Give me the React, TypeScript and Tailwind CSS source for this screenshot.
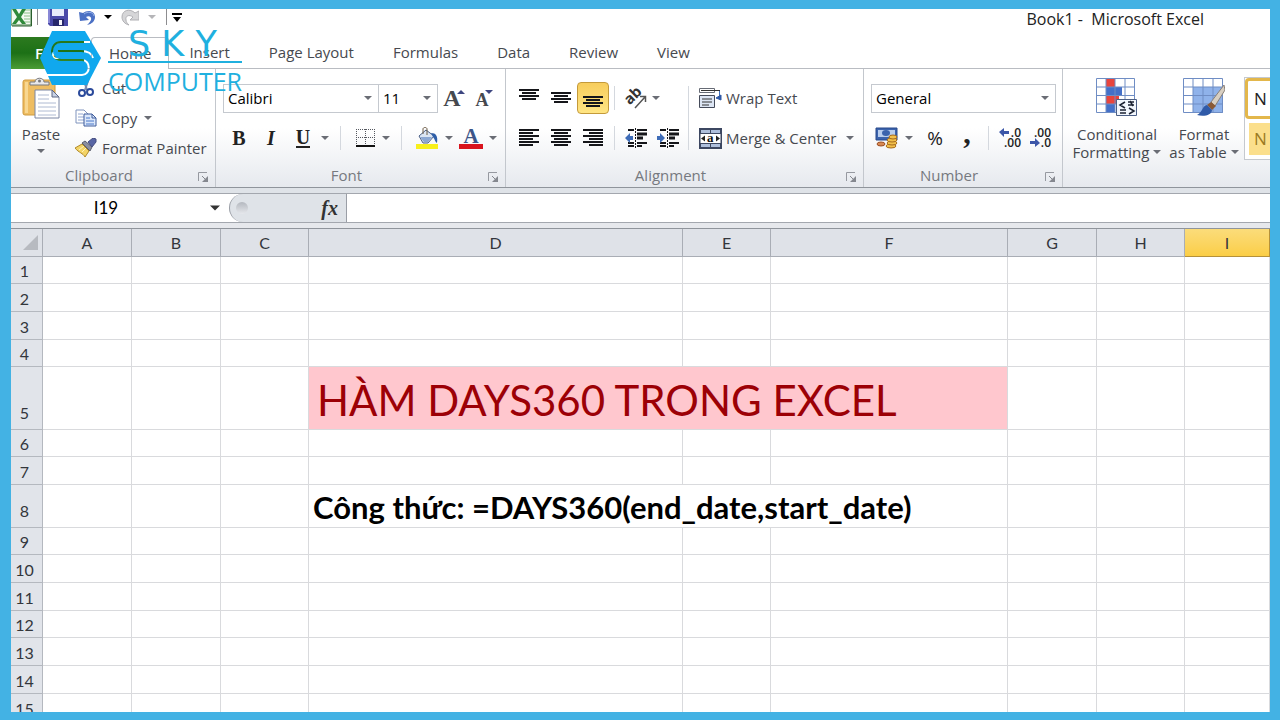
import clsx from "clsx";
import type { FC, ReactNode } from "react";

interface ChildrenProps {
  children: ReactNode;
}

interface IconButtonProps extends ChildrenProps {
  label: string;
  className?: string;
}

const Caret: FC<{ className?: string }> = ({ className }) => (
  <svg
    viewBox="0 0 8 4"
    className={clsx("h-1 w-2 shrink-0 fill-current", className)}
    aria-hidden="true"
  >
    <path d="M0 0h8L4 4z" />
  </svg>
);

const IconButton: FC<IconButtonProps> = ({ label, className, children }) => (
  <button
    type="button"
    aria-label={label}
    className={clsx("flex h-8 items-center justify-center", className ?? "w-8")}
  >
    {children}
  </button>
);

const DropButton: FC<{ label: string }> = ({ label }) => (
  <button
    type="button"
    aria-label={label}
    className="flex h-8 w-3 items-center justify-center text-[#6a6d75]"
  >
    <Caret />
  </button>
);

const Divider: FC<{ className?: string }> = ({ className }) => (
  <span className={clsx("w-px", className ?? "mx-[9px] h-6 bg-[#d4d8de]")} />
);

/* quick access toolbar */

const ExcelIcon = () => (
  <svg viewBox="0 0 22 19" className="h-[19px] w-[22px]" aria-hidden="true">
    <path d="M0 0h20v17H0z" fill="#f4faf2" stroke="#3c7d3f" />
    <path d="M13 2h6M13 5h6M13 8h6M13 11h6M13 14h6" stroke="#8abf88" />
    <path d="M1 1h4l3 5 3-5h4l-5 8 5 7h-4l-3-4-3 4H1l5-7z" fill="#2f8a3a" />
    <path d="M20.500 1v17H1" fill="none" stroke="#2b5f2e" />
  </svg>
);

const SaveIcon = () => (
  <svg viewBox="0 0 20 18" className="h-[18px] w-5" aria-hidden="true">
    <path d="M0 0h20v18H2l-2-2z" fill="#4a49a8" />
    <path d="M4 0h12v8H4z" fill="#e8ebfa" />
    <path d="M5 11h11v7H5z" fill="#27276b" />
    <path d="M11 12h3v5h-3z" fill="#f4f4fb" />
    <path d="M1 0v15" stroke="#8988d6" strokeWidth="2" />
  </svg>
);

const UndoIcon = () => (
  <svg viewBox="0 0 18 17" className="h-[17px] w-[18px]" aria-hidden="true">
    <path d="M0 3l1 9 9-1-3-3c3-2 6 0 5 3-1 2-2 3-4 5 5-1 8-4 8-8 0-6-7-8-12-4z" fill="#4b70c4" />
    <path d="M5 5c4-3 9-2 10 2" fill="none" stroke="#9db6ea" />
  </svg>
);

const RedoIcon = () => (
  <svg viewBox="0 0 18 17" className="h-[17px] w-[18px]" aria-hidden="true">
    <path
      d="M18 2v9H9l3-3C8 5 4 7 5 11c0 2 1 3 3 5-4-1-7-4-7-8 0-7 8-9 13-4z"
      fill="#d6d6d8"
      stroke="#b0b0b4"
    />
  </svg>
);

const QuickAccess = () => (
  <div className="flex items-center">
    <ExcelIcon />
    <Divider className="mx-1 h-4 bg-[#8d8d90]" />
    <IconButton label="Save">
      <SaveIcon />
    </IconButton>
    <IconButton label="Undo" className="w-7">
      <UndoIcon />
    </IconButton>
    <Caret className="mx-0.5 text-black" />
    <IconButton label="Redo">
      <RedoIcon />
    </IconButton>
    <Caret className="mx-0.5 text-[#b5b5b8]" />
    <Divider className="ml-2 h-4 bg-[#8d8d90]" />
    <IconButton label="Customize Quick Access Toolbar" className="w-5">
      <svg viewBox="0 0 10 9" className="h-[9px] w-2.5" aria-hidden="true">
        <path d="M0 0h10v2H0zM1 4h8L5 9z" />
      </svg>
    </IconButton>
  </div>
);

const tabs = ["Insert", "Page Layout", "Formulas", "Data", "Review", "View"];

const TabStrip = () => (
  <nav className="flex h-8 gap-px border-b border-[#b9bcc2]" aria-label="Ribbon tabs">
    <button
      type="button"
      className="-mb-px w-[73px] bg-linear-to-b from-[#2c7a1f] via-[#1c7016] to-[#4b9d35] text-[15px] font-semibold text-white"
    >
      File
    </button>
    <button
      type="button"
      className="-mb-px ml-1.5 rounded-t border border-b-0 border-[#b9bcc2] bg-white px-[17px]"
    >
      Home
    </button>
    {tabs.map((tab) => (
      <button key={tab} type="button" className="px-[19px]">
        {tab}
      </button>
    ))}
  </nav>
);

/* ribbon groups */

interface GroupProps extends ChildrenProps {
  title: string;
  className: string;
}

const Group: FC<GroupProps> = ({ title, className, children }) => (
  <section
    aria-label={title}
    className={clsx("flex shrink-0 flex-col border-r border-[#c3c7cd]", className)}
  >
    <div className="h-[95px]">{children}</div>
    <div className="flex h-[22px] items-center">
      <h2 className="flex-1 text-center text-[#76797f]">{title}</h2>
      <button
        type="button"
        aria-label={`${title} settings`}
        className="flex w-7 justify-end pr-1.5"
      >
        <svg viewBox="0 0 11 11" className="mt-1 h-[11px] w-[11px]" aria-hidden="true">
          <path d="M.5 9V.5H9" fill="none" stroke="#9699a0" />
          <path d="M4 4l4 4" stroke="#85888f" />
          <path d="M10 4v6H4z" fill="#85888f" />
        </svg>
      </button>
    </div>
  </section>
);

const PasteIcon = () => (
  <svg viewBox="0 0 38 42" className="h-[42px] w-[38px]" aria-hidden="true">
    <rect x="1" y="3" width="32" height="35" rx="2" fill="#eebd62" stroke="#cf9a3e" />
    <path d="M3 5h3v31H3z" fill="#f8d791" />
    <path d="M8 8V5h5c0-5 9-5 9 0h5v3z" fill="#e8e8ea" stroke="#77787c" />
    <circle cx="17.500" cy="4" r="1.500" fill="#77787c" />
    <path d="M13 13h17l7 7v21H13z" fill="#fff" stroke="#7b86a4" />
    <path d="M30 13v7h7z" fill="#c9d3e6" stroke="#5c6683" />
    <path
      d="M16 18h11M16 22h11M16 26h18M16 30h18M16 34h18M16 38h18"
      stroke="#aebad2"
    />
  </svg>
);

const CutIcon = () => (
  <svg viewBox="0 0 16 20" className="h-5 w-[22px]" aria-hidden="true">
    <path d="M5 0l4 12M11 0L7 12" stroke="#7c8bb0" strokeWidth="2" />
    <circle cx="4" cy="15" r="3" fill="none" stroke="#2b4a9b" strokeWidth="2" />
    <circle cx="12" cy="14" r="3" fill="none" stroke="#2b4a9b" strokeWidth="2" />
  </svg>
);

const CopyIcon = () => (
  <svg viewBox="0 0 22 18" className="h-[18px] w-[22px]" aria-hidden="true">
    <path d="M1 1h8l4 4v9H1z" fill="#fff" stroke="#7f93bd" />
    <path d="M3 5h5M3 8h7M3 11h7" stroke="#90a5d0" />
    <path d="M9 5h8l4 4v8H9z" fill="#dbe7fa" stroke="#3f5c9c" />
    <path d="M17 5v4h4" fill="none" stroke="#3f5c9c" />
    <path d="M11 9h4M11 12h8M11 15h8" stroke="#4b79c9" />
  </svg>
);

const PainterIcon = () => (
  <svg viewBox="0 0 22 20" className="h-5 w-[22px]" aria-hidden="true">
    <path d="M0 10l7-4 7 7-4 6C8 15 4 15 0 10z" fill="#f3d467" stroke="#b08a2a" />
    <path d="M4 12l5-4M7 14l4-4" stroke="#fff3bd" />
    <path d="M7 5l3-2 7 6-2 4z" fill="#8b8fa0" stroke="#5a5d6c" />
    <path d="M13 4l5-4 3 1 0 3-4 5z" fill="#5865a4" stroke="#454d80" />
  </svg>
);

const ClipboardGroup = () => (
  <Group title="Clipboard" className="w-[205px]">
    <div className="flex">
      <button
        type="button"
        className="ml-2 flex w-11 flex-col items-center pt-2 leading-[18px]"
      >
        <PasteIcon />
        <span className="mt-1.5">Paste</span>
        <Caret className="mt-1.5 text-[#6a6d75]" />
      </button>
      <div className="ml-3 flex flex-col pt-1">
        <button type="button" className="flex h-[30px] items-center gap-[5px]">
          <CutIcon />
          Cut
        </button>
        <button type="button" className="flex h-[30px] items-center gap-[5px]">
          <CopyIcon />
          Copy
          <Caret className="ml-0.5 text-[#6a6d75]" />
        </button>
        <button
          type="button"
          className="flex h-[30px] items-center gap-[5px] whitespace-nowrap"
        >
          <PainterIcon />
          Format Painter
        </button>
      </div>
    </div>
  </Group>
);

interface ComboProps {
  label: string;
  value: string;
  className: string;
}

const Combo: FC<ComboProps> = ({ label, value, className }) => (
  <div
    className={clsx(
      "grid h-[29px] items-center border border-[#c5c9cf] bg-white text-black",
      className,
    )}
  >
    <select
      aria-label={label}
      className="col-start-1 row-start-1 w-full appearance-none bg-transparent pl-1 outline-none"
    >
      <option>{value}</option>
    </select>
    <Caret className="pointer-events-none col-start-1 row-start-1 mr-1.5 justify-self-end text-[#6a6d75]" />
  </div>
);

const BordersIcon = () => (
  <svg viewBox="0 0 19 20" className="h-5 w-[19px]" aria-hidden="true">
    <path
      d="M.5 1v16M9.500 1v16M18.500 1v16M0 1.500h19M0 9.500h19"
      fill="none"
      stroke="#55585f"
      strokeDasharray="1 1"
    />
    <path d="M0 18h19" stroke="#111" strokeWidth="2" />
  </svg>
);

const FillIcon = () => (
  <svg viewBox="0 0 23 23" className="h-[23px] w-[23px]" aria-hidden="true">
    <path d="M0 17h22v5H0z" fill="#f8f01c" />
    <path d="M3 9l7-6 8 6-6 7H7z" fill="#dbe5f3" stroke="#4a5f86" />
    <path d="M4 10h12l-4 5H8z" fill="#8ba7d3" />
    <path d="M7 7V2c0-2 4-2 4 0v6" fill="none" stroke="#6b5a45" />
    <path d="M15 6c5 0 7 3 6 10-2-1-2-4-4-6z" fill="#2f5fa8" />
  </svg>
);

const FontGroup = () => (
  <Group title="Font" className="w-[290px]">
    <div className="pt-[9px] pl-[7px]">
      <div className="flex h-10 items-center">
        <Combo label="Font name" value="Calibri" className="w-[156px]" />
        <Combo label="Font size" value="11" className="w-[59px] border-l-0" />
        <IconButton label="Increase font size">
          <span className="font-['Liberation_Serif'] text-[24px] leading-6 font-bold">A</span>
          <Caret className="mt-2 -ml-1 rotate-180 self-start text-[#3d4680]" />
        </IconButton>
        <IconButton label="Decrease font size" className="w-7">
          <span className="pt-1 font-['Liberation_Serif'] text-[18px] leading-6 font-bold">A</span>
          <Caret className="mt-2 -ml-1 self-start text-[#3d4680]" />
        </IconButton>
      </div>
      <div className="flex h-10 items-center font-['Liberation_Serif'] text-[20px] text-[#222]">
        <IconButton label="Bold">
          <strong>B</strong>
        </IconButton>
        <IconButton label="Italic">
          <em className="font-bold">I</em>
        </IconButton>
        <IconButton label="Underline">
          <span className="border-b-2 leading-[18px] font-bold">U</span>
        </IconButton>
        <DropButton label="Underline style" />
        <Divider />
        <IconButton label="Borders" className="w-[30px]">
          <BordersIcon />
        </IconButton>
        <DropButton label="Border style" />
        <Divider />
        <IconButton label="Fill color">
          <FillIcon />
        </IconButton>
        <DropButton label="Fill colors" />
        <IconButton label="Font color">
          <span className="border-b-[5px] border-[#d9141e] px-1 text-[21px] leading-4 font-bold text-[#3c5488]">
            A
          </span>
        </IconButton>
        <DropButton label="Font colors" />
      </div>
    </div>
  </Group>
);

type Align = "start" | "center" | "end";

const lineWidths = [20, 14, 20, 14, 20, 14];

interface LinesProps {
  align: Align;
  count: number;
  className?: string;
}

const Lines: FC<LinesProps> = ({ align, count, className }) => (
  <svg
    viewBox={`0 0 20 ${count * 3}`}
    className={clsx("w-5 fill-[#15161a]", className)}
    aria-hidden="true"
  >
    {lineWidths.slice(0, count).map((width, index) => {
      const slack = 20 - width;
      const x = align === "start" ? 0 : align === "end" ? slack : slack / 2;
      return <rect key={index} x={x} y={index * 3} width={width} height={2} />;
    })}
  </svg>
);

const OrientationIcon = () => (
  <svg viewBox="0 0 24 20" className="h-5 w-6 overflow-visible" aria-hidden="true">
    <text
      x="3"
      y="17"
      transform="rotate(-45 5 14)"
      fontFamily="Open Sans, sans-serif"
      fontSize="15"
      fontWeight="700"
      fill="#333"
    >
      ab
    </text>
    <path d="M11 20L21 9M16 8.500h5.500V14" fill="none" stroke="#555" strokeWidth="1.500" />
  </svg>
);

const IndentIcon: FC<{ increase?: boolean }> = ({ increase }) => (
  <svg viewBox="0 0 22 20" className="h-5 w-[22px]" aria-hidden="true">
    <path d="M3 2h6M12 2h10M3 15h6M12 15h10M3 18h6M12 18h5" stroke="#15161a" strokeWidth="2" />
    <path d="M12 6h10M12 10h6" stroke="#15161a" strokeWidth="3" />
    <path d="M10.500 0v20" stroke="#15161a" strokeDasharray="2 1" />
    <path
      d={increase ? "M0 8h3V5l5 5-5 5v-3H0z" : "M8 8H5V5l-5 5 5 5v-3h3z"}
      fill="#3e6cb8"
    />
  </svg>
);

const WrapIcon = () => (
  <svg viewBox="0 0 23 22" className="h-[22px] w-[23px]" aria-hidden="true">
    <path d="M.5 1.500h15v4H.5z" fill="#fff" stroke="#666b75" />
    <path d="M2 3.500h19" stroke="#333" />
    <path d="M.5 8.500h15v12H.5z" fill="#dde6f4" stroke="#454b5a" />
    <path d="M3 12h10M3 15h10M3 18h7" stroke="#333" />
    <path d="M20.500 4v7" stroke="#3e6cb8" />
    <path d="M17 11l5-3v5z" fill="#2f58a5" stroke="#2f58a5" />
  </svg>
);

const MergeIcon = () => (
  <svg viewBox="0 0 23 21" className="h-[21px] w-[23px]" aria-hidden="true">
    <path d="M1 1h21v19H1z" fill="#aebfdc" stroke="#3c4761" strokeWidth="2" />
    <path d="M11.500 1v4M11.500 16v4" stroke="#3c4761" />
    <path d="M1 5.500h21v10H1z" fill="#fff" stroke="#3c4761" />
    <path d="M2 10.500l4-3v6zM21 10.500l-4-3v6z" fill="#222" />
    <text
      x="8"
      y="14"
      fontFamily="Liberation Serif, serif"
      fontSize="13"
      fontWeight="700"
      fill="#111"
    >
      a
    </text>
  </svg>
);

const AlignmentGroup = () => (
  <Group title="Alignment" className="w-[358px]">
    <div className="flex pt-[9px] pl-[7px]">
      <div>
        <div className="flex h-10 items-center">
          <IconButton label="Top align">
            <Lines align="center" count={4} className="mb-1.5 h-3" />
          </IconButton>
          <IconButton label="Middle align">
            <Lines align="center" count={4} className="h-3" />
          </IconButton>
          <IconButton
            label="Bottom align"
            className="w-8 rounded border border-[#c49a3a] bg-linear-to-b from-[#f7cd5c] to-[#ffe583]"
          >
            <Lines align="center" count={4} className="mt-2 h-3" />
          </IconButton>
          <Divider className="mx-[5px] h-6 bg-[#d4d8de]" />
          <IconButton label="Orientation">
            <OrientationIcon />
          </IconButton>
          <button
            type="button"
            aria-label="Orientation options"
            className="flex h-8 w-2 items-center text-[#6a6d75]"
          >
            <Caret />
          </button>
        </div>
        <div className="flex h-10 items-center">
          <IconButton label="Align left">
            <Lines align="start" count={6} className="h-[18px]" />
          </IconButton>
          <IconButton label="Center">
            <Lines align="center" count={6} className="h-[18px]" />
          </IconButton>
          <IconButton label="Align right">
            <Lines align="end" count={6} className="h-[18px]" />
          </IconButton>
          <Divider className="mx-[5px] h-6 bg-[#d4d8de]" />
          <IconButton label="Decrease indent">
            <IndentIcon />
          </IconButton>
          <IconButton label="Increase indent">
            <IndentIcon increase />
          </IconButton>
        </div>
      </div>
      <Divider className="mt-2 ml-1 h-16 bg-[#d4d8de]" />
      <div className="ml-2.5 whitespace-nowrap">
        <button type="button" className="flex h-10 items-center gap-1">
          <WrapIcon />
          Wrap Text
        </button>
        <button type="button" className="flex h-10 items-center gap-1">
          <MergeIcon />
          Merge &amp; Center
          <Caret className="ml-1.5 text-[#6a6d75]" />
        </button>
      </div>
    </div>
  </Group>
);

const CurrencyIcon = () => (
  <svg viewBox="0 0 24 23" className="h-[23px] w-6" aria-hidden="true">
    <path d="M1 1h21v12H1z" fill="#3b63ad" stroke="#28498a" />
    <path d="M3 3h17v7H3z" fill="#b8cdee" />
    <ellipse cx="11" cy="6" rx="4" ry="3" fill="#3b63ad" />
    <g fill="#f1bf4a" stroke="#a56a1d">
      <ellipse cx="16" cy="19" rx="5" ry="2" />
      <ellipse cx="17" cy="16" rx="5" ry="2" />
      <ellipse cx="17" cy="13" rx="5" ry="2" />
      <ellipse cx="18" cy="10" rx="4" ry="2" />
    </g>
    <ellipse cx="6" cy="17" rx="4" ry="2" fill="#d98a54" stroke="#9c4f24" />
  </svg>
);

const DecimalIcon: FC<{ increase?: boolean }> = ({ increase }) => (
  <svg
    viewBox="0 0 22 22"
    className="h-[22px] w-[22px] overflow-visible"
    fontFamily="Open Sans, sans-serif"
    fontSize="12"
    fontWeight="600"
    fill="#222"
    textAnchor="end"
    aria-hidden="true"
  >
    <text x="22" y="10">
      {increase ? ".0" : ".00"}
    </text>
    <text x="22" y="20">
      {increase ? ".00" : ".0"}
    </text>
    <path
      d={increase ? "M10 4H5V1L0 5l5 5V7h5z" : "M1 14h5v-3l5 5-5 4v-3H1z"}
      fill="#3c56a8"
    />
  </svg>
);

const NumberGroup = () => (
  <Group title="Number" className="w-[199px]">
    <div className="pt-[9px] pl-[7px]">
      <div className="flex h-10 items-center">
        <Combo label="Number format" value="General" className="w-[185px]" />
      </div>
      <div className="flex h-10 items-center text-[#222]">
        <IconButton label="Accounting format">
          <CurrencyIcon />
        </IconButton>
        <DropButton label="Accounting formats" />
        <IconButton label="Percent style" className="ml-1 w-8 text-[19px]">
          %
        </IconButton>
        <IconButton
          label="Comma style"
          className="w-8 pb-3 font-['Liberation_Serif'] text-[30px] font-bold"
        >
          ,
        </IconButton>
        <Divider className="mx-[5px] h-6 bg-[#d4d8de]" />
        <IconButton label="Increase decimal">
          <DecimalIcon increase />
        </IconButton>
        <IconButton label="Decrease decimal" className="w-7">
          <DecimalIcon />
        </IconButton>
      </div>
    </div>
  </Group>
);

const ConditionalIcon = () => (
  <svg viewBox="0 0 42 40" className="h-10 w-[42px]" aria-hidden="true">
    <path d="M.5 1.500h38v34H.5z" fill="#fff" />
    <path d="M10 1h9v9h-9zM10 19h13v8H10z" fill="#e8443c" />
    <path d="M10 10h16v9H10zM10 27h9v9h-9z" fill="#4470c8" />
    <path
      d="M.5 1.500h38v34H.5zM0 10h39M0 18.500h39M0 27h39M10 1v35M19 1v35M29 1v35"
      fill="none"
      stroke="#6f8dc4"
    />
    <path d="M20.500 22.500h20v16h-20z" fill="#f3f7fd" stroke="#4c5f85" />
    <path
      d="M29 25l-5 3 5 3M24 33h6M24 36h6M32 25h6M32 28h6M34 24l3 5M33 31l5 3-5 3"
      fill="none"
      stroke="#1c2333"
      strokeWidth="1.500"
    />
  </svg>
);

const TableFormatIcon = () => (
  <svg viewBox="0 0 42 40" className="h-10 w-[42px]" aria-hidden="true">
    <path d="M.5 1.500h39v34H.5z" fill="#fff" />
    <path d="M10 10h30v26H10z" fill="#8fb2ea" />
    <path
      d="M.5 1.500h39v34H.5zM0 10h40M0 18.500h40M0 27h40M10 1v35M20 1v35M30 1v35"
      fill="none"
      stroke="#6f8dc4"
    />
    <path d="M41 8L28 25l4 4L42 13z" fill="#d8cfc2" stroke="#8a8078" />
    <path d="M28 25l-4 3 5 5 4-4z" fill="#8b5a36" />
    <path d="M24 28c-5 1-4 7-10 10 7 2 15 0 15-5z" fill="#2f5aa8" />
  </svg>
);

const StylesGroup = () => (
  <section aria-label="Styles" className="flex min-w-0 flex-1 overflow-hidden">
    <button
      type="button"
      className="flex h-[95px] w-[108px] shrink-0 flex-col items-center pt-2 leading-[18px]"
    >
      <ConditionalIcon />
      <span className="mt-2">Conditional</span>
      <span className="flex items-center gap-1">
        Formatting
        <Caret className="text-[#6a6d75]" />
      </span>
    </button>
    <button
      type="button"
      className="flex h-[95px] w-[66px] shrink-0 flex-col items-center pt-2 leading-[18px] whitespace-nowrap"
    >
      <TableFormatIcon />
      <span className="mt-2">Format</span>
      <span className="flex items-center gap-1">
        as Table
        <Caret className="text-[#6a6d75]" />
      </span>
    </button>
    <div className="mt-2 ml-[7px] flex h-[83px] flex-1 flex-col gap-1 border border-r-0 border-[#c5c9cf] bg-white text-[17px]">
      <button
        type="button"
        aria-label="Normal"
        className="h-[41px] rounded-l border-[3px] border-r-0 border-[#e3b74b] pl-1.5 text-left text-[#222]"
      >
        N
      </button>
      <button
        type="button"
        aria-label="Neutral"
        className="ml-1 h-8 bg-[#fbdf8c] pl-[5px] text-left text-[#9c7a22]"
      >
        N
      </button>
    </div>
  </section>
);

/* formula bar and sheet */

const FormulaBar = () => (
  <div className="flex h-[29px] border-b border-[#a3a7ae] bg-white text-black">
    <input
      aria-label="Name box"
      defaultValue="I19"
      className="w-[190px] text-center font-['Lato'] text-[17px] outline-none"
    />
    <button
      type="button"
      aria-label="Named ranges"
      className="flex w-7 items-center justify-center text-[#333]"
    >
      <Caret className="h-1.5 w-2.5" />
    </button>
    <div className="flex w-[118px] items-center justify-between rounded-l-full border border-y-0 border-[#9a9ea6] bg-[#dfe3e8] pr-2 pl-1.5">
      <span className="h-3 w-3 rounded-full bg-linear-to-b from-[#b4b8bf] to-[#e6e8ec]" />
      <button
        type="button"
        aria-label="Insert function"
        className="font-['Liberation_Serif'] text-[20px] font-bold text-[#333] italic"
      >
        fx
      </button>
    </div>
    <input aria-label="Formula" className="min-w-0 flex-1 px-1 outline-none" />
  </div>
);

const columns = [
  { name: "A", width: "w-[89px]" },
  { name: "B", width: "w-[89px]" },
  { name: "C", width: "w-[88px]" },
  { name: "D", width: "w-[374px]" },
  { name: "E", width: "w-[88px]" },
  { name: "F", width: "w-[237px]" },
  { name: "G", width: "w-[89px]" },
  { name: "H", width: "w-[88px]" },
  { name: "I", width: "" },
];

const rowHeights = [
  "h-[27px]",
  "h-[28px]",
  "h-[28px]",
  "h-[27px]",
  "h-[63px]",
  "h-[27px]",
  "h-[28px]",
  "h-[43px]",
  "h-[27px]",
  "h-[28px]",
  "h-[28px]",
  "h-[27px]",
  "h-[28px]",
  "h-[28px]",
  "h-[28px]",
];

interface MergedCell {
  text: string;
  className: string;
}

// both texts run from D across to F
const mergedCells: Record<number, MergedCell> = {
  5: {
    text: "HÀM DAYS360 TRONG EXCEL",
    className: "bg-[#ffc7ce] pl-2 text-[42px] leading-[58px] text-[#9c0006]",
  },
  8: {
    text: "Công thức: =DAYS360(end_date,start_date)",
    className: "pl-1 text-[31px] leading-10 font-bold text-black",
  },
};

const Sheet = () => (
  <table className="w-full table-fixed border-separate border-spacing-0 border-t border-[#8f949b] font-['Lato'] text-[16px] leading-[25px] text-[#33363c]">
    <colgroup>
      <col className="w-8" />
      {columns.map(({ name, width }) => (
        <col key={name} className={width} />
      ))}
    </colgroup>
    <thead>
      <tr className="h-7">
        <th className="border-r border-b border-[#a9adb5] bg-[#dfe2e8] p-0">
          <svg viewBox="0 0 15 15" className="ml-3 h-[15px] w-[15px]" aria-hidden="true">
            <path d="M15 0v15H0z" fill="#b7bac0" />
          </svg>
        </th>
        {columns.map(({ name }) => (
          <th
            key={name}
            scope="col"
            className={clsx(
              "border-r border-b p-0 font-normal",
              name === "I"
                ? "border-[#b5913a] bg-linear-to-b from-[#fbdc7a] to-[#fbce45]"
                : "border-[#a9adb5] bg-[#dfe2e8]",
            )}
          >
            {name}
          </th>
        ))}
      </tr>
    </thead>
    <tbody>
      {rowHeights.map((height, index) => {
        const row = index + 1;
        const merged = mergedCells[row];
        return (
          <tr key={row} className={height}>
            <th
              scope="row"
              className={clsx(
                "border-r border-b border-[#b4b8bf] bg-[#e1e4ea] p-0 pr-1 align-bottom font-normal",
                merged && "pb-1",
              )}
            >
              {row}
            </th>
            {columns.map(({ name }) => {
              if (merged && (name === "E" || name === "F")) return null;
              if (merged && name === "D") {
                return (
                  <td
                    key={name}
                    colSpan={3}
                    className={clsx(
                      "border-r border-b border-[#d9dadd] p-0 align-bottom whitespace-nowrap",
                      merged.className,
                    )}
                  >
                    {merged.text}
                  </td>
                );
              }
              return <td key={name} className="border-r border-b border-[#d9dadd] p-0" />;
            })}
          </tr>
        );
      })}
    </tbody>
  </table>
);

const Watermark = () => (
  <div className="pointer-events-none absolute top-[18px] left-[29px] flex items-start gap-1.5">
    <svg viewBox="0 0 62 56" className="mt-1 h-14 w-[62px]" aria-hidden="true">
      <mask id="logo-channels">
        <path d="M0 0h62v56H0z" fill="#fff" />
        <path
          d="M50 11H21C9 11 9 29 21 29h21c9 0 9 15 0 15H2"
          fill="none"
          stroke="#000"
          strokeWidth="2"
        />
        <path d="M18 20h23c7 0 11 3 12 7" fill="none" stroke="#000" strokeWidth="2" />
      </mask>
      <path
        d="M12 0h33l16 27-14 27H12L0 27z"
        fill="#10a8ee"
        mask="url(#logo-channels)"
      />
    </svg>
    <div className="text-[#1fb0df]">
      <div className="border-b-2 pl-5 font-['DejaVu_Sans'] text-[35px] leading-[34px]">
        S K Y
      </div>
      <div className="pt-1 text-[25px] leading-7">COMPUTER</div>
    </div>
  </div>
);

export default function App() {
  return (
    <div className="h-screen overflow-hidden bg-[#43b2e4] pt-[9px] pr-2.5 pb-2 pl-[11px] font-['Open_Sans'] text-[15px] text-[#46494f]">
      <div className="relative flex h-full flex-col overflow-hidden bg-white">
        <header className="flex h-7 shrink-0 items-start justify-between">
          <div className="-mt-2">
            <QuickAccess />
          </div>
          <h1 className="pr-[66px] text-[16px] leading-5 whitespace-pre text-[#222]">
            Book1 -  Microsoft Excel
          </h1>
        </header>
        <TabStrip />
        <div className="flex h-[119px] shrink-0 border-b border-[#8f949b] bg-linear-to-b from-white from-50% to-[#e6e9ee]">
          <ClipboardGroup />
          <FontGroup />
          <AlignmentGroup />
          <NumberGroup />
          <StylesGroup />
        </div>
        <div className="h-1.5 shrink-0 border-b border-[#a3a7ae] bg-[#dfe3e8]" />
        <FormulaBar />
        <div className="h-[5px] shrink-0 bg-[#e6e8ec]" />
        <main className="min-h-0 flex-1 overflow-hidden">
          <Sheet />
        </main>
        <Watermark />
      </div>
    </div>
  );
}
